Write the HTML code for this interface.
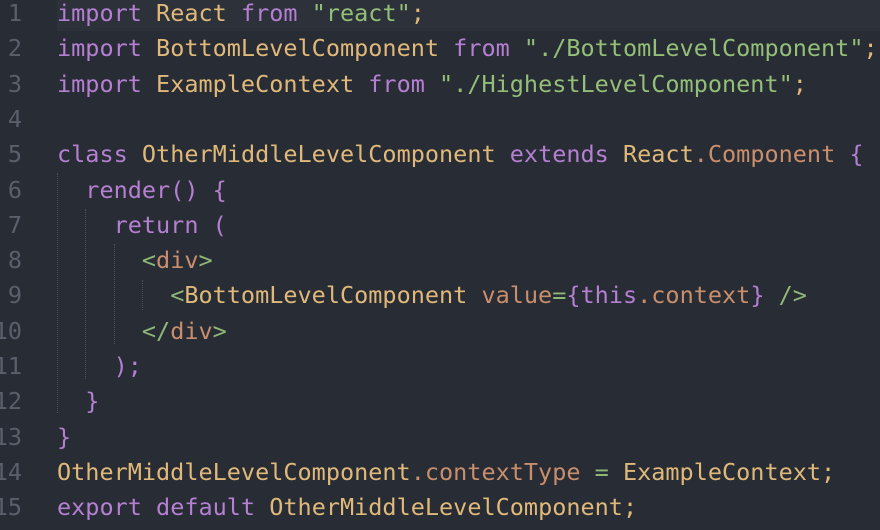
<!DOCTYPE html>
<html><head><style>
html,body{margin:0;padding:0;background:#282c34;width:880px;height:530px;overflow:hidden}
.wrap{position:relative;width:880px;height:530px}
.l{position:absolute;left:0;height:35.3px;line-height:35.3px;font-family:"DejaVu Sans Mono","Liberation Mono",monospace;font-size:23.5px;white-space:pre;width:880px}
.n{position:absolute;left:-40px;width:62px;text-align:right;color:#5a606b}
.c{position:absolute;left:57px;color:#abb2bf;letter-spacing:0px}
.k{color:#b57fd2}.t{color:#e0b97a}.s{color:#93bf78}.b{color:#c98e6c}.g{color:#8fb878}.p{color:#b57fd2}
.hl{position:absolute;left:57px;top:-4px;width:823px;height:35px;background:#2c313a}
.gd{position:absolute;width:0;border-left:1px dotted #4b515c}
</style></head><body><div class="wrap">
<div class="hl"></div>
<div class="gd" style="left:57px;top:173px;height:240px"></div>
<div class="gd" style="left:85px;top:209px;height:170px"></div>
<div class="gd" style="left:114px;top:244px;height:100px"></div>
<div class="gd" style="left:142px;top:280px;height:30px"></div>
<div class="l" style="top:-4px"><span class="n">1</span><span class="c"><span class="k">import</span> <span class="t">React</span> <span class="k">from</span> <span class="s">"react"</span><span class="t">;</span></span></div>
<div class="l" style="top:31.3px"><span class="n">2</span><span class="c"><span class="k">import</span> <span class="t">BottomLevelComponent</span> <span class="k">from</span> <span class="s">"./BottomLevelComponent"</span><span class="t">;</span></span></div>
<div class="l" style="top:66.6px"><span class="n">3</span><span class="c"><span class="k">import</span> <span class="t">ExampleContext</span> <span class="k">from</span> <span class="s">"./HighestLevelComponent"</span><span class="t">;</span></span></div>
<div class="l" style="top:101.9px"><span class="n">4</span></div>
<div class="l" style="top:137.2px"><span class="n">5</span><span class="c"><span class="k">class</span> <span class="t">OtherMiddleLevelComponent</span> <span class="k">extends</span> <span class="t">React</span><span class="b">.Component</span> <span class="p">{</span></span></div>
<div class="l" style="top:172.5px"><span class="n">6</span><span class="c">  <span class="k">render() {</span></span></div>
<div class="l" style="top:207.8px"><span class="n">7</span><span class="c">    <span class="k">return (</span></span></div>
<div class="l" style="top:243.1px"><span class="n">8</span><span class="c">      <span class="g">&lt;</span><span class="b">div</span><span class="g">&gt;</span></span></div>
<div class="l" style="top:278.4px"><span class="n">9</span><span class="c">        <span class="g">&lt;</span><span class="t">BottomLevelComponent</span> <span class="b">value</span><span class="g">=</span><span class="p">{</span><span class="k">this</span><span class="b">.context</span><span class="p">}</span> <span class="g">/&gt;</span></span></div>
<div class="l" style="top:313.7px"><span class="n">10</span><span class="c">      <span class="g">&lt;/</span><span class="b">div</span><span class="g">&gt;</span></span></div>
<div class="l" style="top:349px"><span class="n">11</span><span class="c">    <span class="k">);</span></span></div>
<div class="l" style="top:384.3px"><span class="n">12</span><span class="c">  <span class="k">}</span></span></div>
<div class="l" style="top:419.6px"><span class="n">13</span><span class="c"><span class="k">}</span></span></div>
<div class="l" style="top:454.9px"><span class="n">14</span><span class="c"><span class="t">OtherMiddleLevelComponent</span><span class="b">.contextType</span> <span class="g">=</span> <span class="t">ExampleContext;</span></span></div>
<div class="l" style="top:490.2px"><span class="n">15</span><span class="c"><span class="k">export</span> <span class="k">default</span> <span class="t">OtherMiddleLevelComponent;</span></span></div>
</div></body></html>
